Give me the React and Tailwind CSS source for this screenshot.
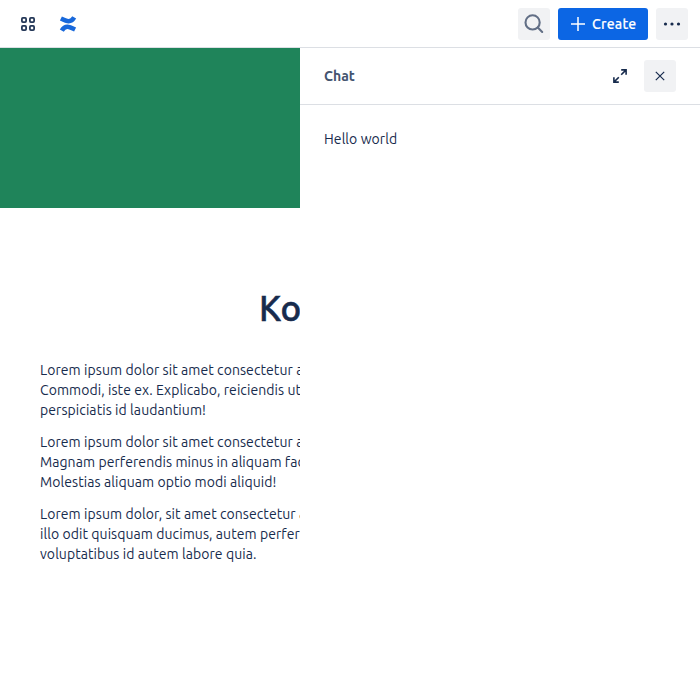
const paragraphs = [
  [
    "Lorem ipsum dolor sit amet consectetur a",
    "Commodi, iste ex. Explicabo, reiciendis ut",
    "perspiciatis id laudantium!",
  ],
  [
    "Lorem ipsum dolor sit amet consectetur a",
    "Magnam perferendis minus in aliquam fac",
    "Molestias aliquam optio modi aliquid!",
  ],
  [
    "Lorem ipsum dolor, sit amet consectetur a",
    "illo odit quisquam ducimus, autem perfer",
    "voluptatibus id autem labore quia.",
  ],
];

function AppSwitcherIcon() {
  return (
    <svg width="24" height="24" viewBox="0 0 24 24" fill="none" stroke="#253858" strokeWidth="1.8">
      <rect x="5.9" y="5.9" width="4.2" height="4.2" rx="1" />
      <rect x="13.9" y="5.9" width="4.2" height="4.2" rx="1" />
      <rect x="5.9" y="13.9" width="4.2" height="4.2" rx="1" />
      <rect x="13.9" y="13.9" width="4.2" height="4.2" rx="1" />
    </svg>
  );
}

function ConfluenceIcon() {
  return (
    <svg className="overflow-visible" width="16" height="16" viewBox="0 0 16 16" fill="none" stroke="#1868db" strokeWidth="4.6">
      <path d="M0.9 2.5 C7 5.4 10.8 7.1 14.2 1.4" />
      <path d="M15.1 13.5 C9 10.6 5.2 8.9 1.8 14.6" />
    </svg>
  );
}

export default function App() {
  return (
    <div className="flex h-[700px] w-[700px] flex-col overflow-hidden bg-white font-[Ubuntu,'Noto_Sans',sans-serif] text-sm leading-5 text-[#172b4d]">
      <header className="flex h-12 shrink-0 items-center justify-between border-b border-[#dcdfe4] pr-3 pl-4">
        <div className="flex items-center gap-5">
          <AppSwitcherIcon />
          <ConfluenceIcon />
        </div>
        <div className="flex gap-2">
          <button className="flex size-8 items-center justify-center rounded-[3px] bg-[#f1f2f4]">
            <svg width="24" height="24" viewBox="0 0 24 24" fill="none" stroke="#626f86" strokeWidth="2.1">
              <circle cx="10.6" cy="10.4" r="7.1" />
              <path d="M15.8 15.6 L20.2 20" strokeLinecap="round" />
            </svg>
          </button>
          <button className="flex h-8 w-[90px] items-center rounded-[3px] bg-[#0c66e4] pl-3 font-medium text-white">
            <svg className="mr-1.5" width="16" height="16" viewBox="0 0 16 16" fill="none" stroke="#fff" strokeWidth="1.5">
              <path d="M8 1 V15 M1 8 H15" />
            </svg>
            <span className="tracking-[0.25px] whitespace-nowrap [-webkit-text-stroke:0.15px]">Create</span>
          </button>
          <button className="flex size-8 items-center justify-center rounded-[3px] bg-[#f1f2f4]">
            <svg width="24" height="24" viewBox="0 0 24 24" fill="#172b4d">
              <circle cx="5.5" cy="12" r="1.6" />
              <circle cx="12" cy="12" r="1.6" />
              <circle cx="18.5" cy="12" r="1.6" />
            </svg>
          </button>
        </div>
      </header>
      <div className="flex flex-1">
        <main className="w-[300px] shrink-0 overflow-hidden">
          <div className="h-40 bg-[#1f845a]" />
          <h1 className="mt-20 pl-[259px] text-[35px] leading-10 font-medium whitespace-nowrap [-webkit-text-stroke:0.55px]">Ko</h1>
          <div className="mt-8 flex flex-col gap-3 pl-10">
            {paragraphs.map((lines, i) => (
              <p key={i} className="tracking-[0.07px]">
                {lines.map((text) => (
                  <span key={text} className="block w-max">{text}</span>
                ))}
              </p>
            ))}
          </div>
        </main>
        <aside className="w-[400px] bg-white">
          <div className="flex h-[57px] items-center justify-between border-b border-[#dcdfe4] px-6">
            <h2 className="font-bold text-[#44546f]">Chat</h2>
            <div className="flex gap-2">
              <button className="flex size-8 items-center justify-center">
                <svg width="16" height="16" viewBox="0 0 16 16" fill="none" stroke="#172b4d" strokeWidth="1.6">
                  <path d="M9.2 1.9 H14.1 V6.8 M14.1 1.9 L9.2 6.8 M6.8 14.1 H1.9 V9.2 M1.9 14.1 L6.8 9.2" />
                </svg>
              </button>
              <button className="flex size-8 items-center justify-center rounded-[3px] bg-[#f1f2f4]">
                <svg width="16" height="16" viewBox="0 0 16 16" fill="none" stroke="#172b4d" strokeWidth="1.2">
                  <path d="M3.8 3.8 L12.2 12.2 M12.2 3.8 L3.8 12.2" />
                </svg>
              </button>
            </div>
          </div>
          <p className="px-6 pt-6 tracking-[0.07px]">Hello world</p>
        </aside>
      </div>
    </div>
  );
}
